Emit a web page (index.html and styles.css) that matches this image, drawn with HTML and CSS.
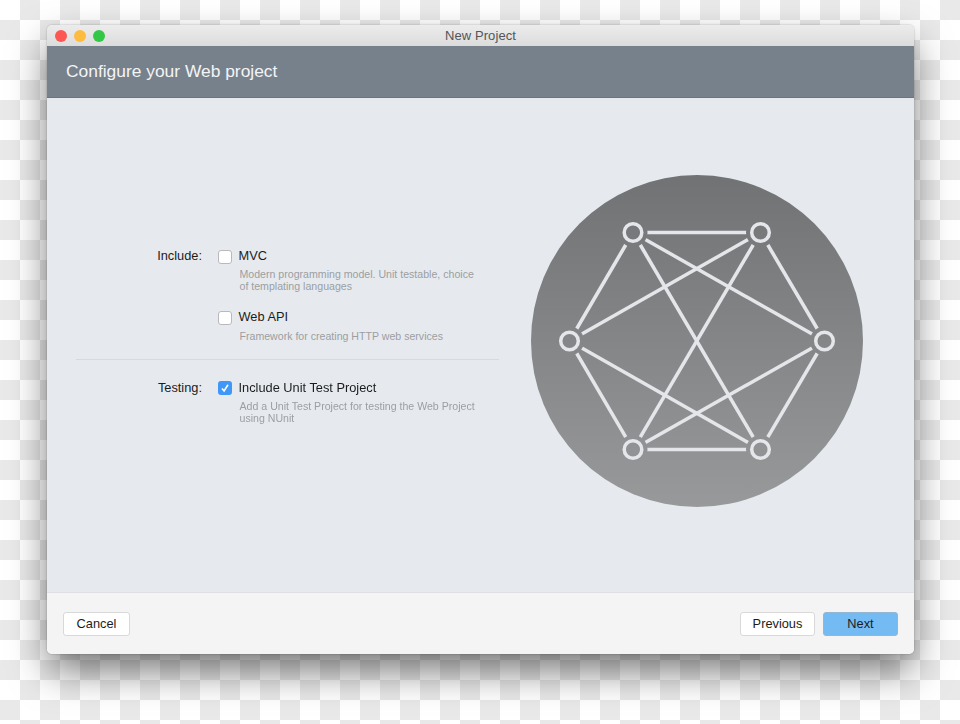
FILE: index.html
```html
<!DOCTYPE html>
<html>
<head>
<title>New Project</title>
<link rel="stylesheet" href="styles.css">
</head>
<body>
<div class="window">
    <div class="titlebar">
        <div class="lights">
            <span class="light red"></span>
            <span class="light yellow"></span>
            <span class="light green"></span>
        </div>
        <div class="window-title">New Project</div>
    </div>
    <div class="banner">Configure your Web project</div>
    <div class="content">
        <div class="form">
            <div class="row">
                <div class="label">Include:</div>
                <span class="check"></span>
                <div class="option">MVC</div>
            </div>
            <div class="desc">Modern programming model. Unit testable, choice<br>of templating languages</div>
            <div class="row next-row">
                <div class="label"></div>
                <span class="check"></span>
                <div class="option">Web API</div>
            </div>
            <div class="desc single">Framework for creating HTTP web services</div>
            <hr class="divider">
            <div class="row">
                <div class="label">Testing:</div>
                <span class="check checked">
                    <svg width="14" height="14" viewBox="0 0 14 14"><path d="M4 7.4 6.1 10 10 3.8" fill="none" stroke="#fff" stroke-width="1.6"/></svg>
                </span>
                <div class="option">Include Unit Test Project</div>
            </div>
            <div class="desc">Add a Unit Test Project for testing the Web Project<br>using NUnit</div>
        </div>
        <div class="picture">
            <svg width="332" height="332" viewBox="0 0 332 332">
                <defs>
                    <linearGradient id="disc" x1="0" y1="0" x2="0" y2="1">
                        <stop offset="0" stop-color="#717274"/>
                        <stop offset="1" stop-color="#98999b"/>
                    </linearGradient>
                    <mask id="gaps" maskUnits="userSpaceOnUse" x="0" y="0" width="332" height="332">
                        <rect width="332" height="332" fill="#fff"/>
                        <circle cx="102" cy="57.5" r="14.5" fill="#000"/>
                        <circle cx="229.5" cy="57.5" r="14.5" fill="#000"/>
                        <circle cx="38.5" cy="166" r="14.5" fill="#000"/>
                        <circle cx="293.5" cy="166" r="14.5" fill="#000"/>
                        <circle cx="102" cy="274.5" r="14.5" fill="#000"/>
                        <circle cx="229.5" cy="274.5" r="14.5" fill="#000"/>
                    </mask>
                </defs>
                <circle cx="166" cy="166" r="166" fill="url(#disc)"/>
                <g stroke="#e4e6ea" stroke-width="3.5" mask="url(#gaps)">
                    <line x1="102" y1="57.5" x2="229.5" y2="57.5"/>
                    <line x1="102" y1="57.5" x2="38.5" y2="166"/>
                    <line x1="102" y1="57.5" x2="293.5" y2="166"/>
                    <line x1="102" y1="57.5" x2="229.5" y2="274.5"/>
                    <line x1="229.5" y1="57.5" x2="38.5" y2="166"/>
                    <line x1="229.5" y1="57.5" x2="293.5" y2="166"/>
                    <line x1="229.5" y1="57.5" x2="102" y2="274.5"/>
                    <line x1="38.5" y1="166" x2="102" y2="274.5"/>
                    <line x1="38.5" y1="166" x2="229.5" y2="274.5"/>
                    <line x1="293.5" y1="166" x2="102" y2="274.5"/>
                    <line x1="293.5" y1="166" x2="229.5" y2="274.5"/>
                    <line x1="102" y1="274.5" x2="229.5" y2="274.5"/>
                </g>
                <g fill="none" stroke="#e4e6ea" stroke-width="3.5">
                    <circle cx="102" cy="57.5" r="8.8"/>
                    <circle cx="229.5" cy="57.5" r="8.8"/>
                    <circle cx="38.5" cy="166" r="8.8"/>
                    <circle cx="293.5" cy="166" r="8.8"/>
                    <circle cx="102" cy="274.5" r="8.8"/>
                    <circle cx="229.5" cy="274.5" r="8.8"/>
                </g>
            </svg>
        </div>
    </div>
    <div class="footer">
        <div class="btn">Cancel</div>
        <div class="footer-right">
            <div class="btn wide">Previous</div>
            <div class="btn wide primary">Next</div>
        </div>
    </div>
</div>
</body>
</html>
```

FILE: styles.css
```css
html, body {
    margin: 0;
    height: 100%;
}
body {
    height: 724px;
    overflow: hidden;
    box-sizing: border-box;
    padding: 25px 0 0 47px;
    background: repeating-conic-gradient(#e9e9e9 0 25%, #fff 0 50%) 0 0 / 40px 40px;
    font-family: "Liberation Sans", Arial, sans-serif;
    color: #1c1c1c;
}
.window {
    width: 867px;
    height: 629px;
    display: flex;
    flex-direction: column;
    border-radius: 5px;
    overflow: hidden;
    box-shadow: 0 18px 38px -2px rgba(0, 0, 0, 0.55), 0 0 2px rgba(0, 0, 0, 0.3);
    filter: blur(0.3px);
}
.titlebar {
    height: 21px;
    flex: none;
    display: flex;
    align-items: center;
    justify-content: center;
    position: relative;
    background: linear-gradient(#ececec, #dcdcdc);
}
.lights {
    position: absolute;
    left: 8px;
    top: 5px;
    display: flex;
    gap: 7px;
}
.light {
    width: 12px;
    height: 12px;
    border-radius: 50%;
}
.red { background: #fc5753; }
.yellow { background: #fdbc40; }
.green { background: #33c748; }
.window-title {
    font-size: 13px;
    letter-spacing: 0.1px;
    color: #555;
}
.banner {
    height: 51px;
    flex: none;
    display: flex;
    align-items: center;
    padding-left: 19px;
    background: #77818c;
    border-bottom: 1px solid #6b757f;
    color: #f3f4f6;
    font-size: 17.4px;
}
.content {
    flex: 1;
    display: flex;
    align-items: center;
    gap: 32px;
    padding: 0 0 8px 29px;
    background: #e6eaef;
}
.form {
    width: 423px;
    margin-bottom: 11px;
}
.row {
    display: flex;
    align-items: center;
    height: 16px;
    font-size: 12.8px;
}
.next-row {
    margin-top: 17px;
}
.label {
    width: 126px;
    margin-right: 16px;
    text-align: right;
}
.check {
    width: 12px;
    height: 12px;
    margin: 2px 6.5px 0 0;
    border: 1px solid #b9b9bb;
    border-radius: 3px;
    background: #fff;
    display: block;
}
.check.checked {
    width: 14px;
    height: 14px;
    margin-top: 0;
    border: 0;
    background: #3f97f8;
}
.check svg {
    display: block;
}
.desc {
    margin: 4px 0 0 163.5px;
    font-size: 10.6px;
    line-height: 12px;
    color: #9c9ea1;
}
.desc.single {
    margin-top: 5px;
}
.divider {
    height: 1px;
    margin: 17px 0 20px;
    border: 0;
    background: #d8d9dc;
}
.picture {
    width: 332px;
    height: 332px;
}
.picture svg {
    display: block;
}
.footer {
    height: 61px;
    flex: none;
    display: flex;
    align-items: center;
    justify-content: space-between;
    padding: 0 16px;
    background: #f4f4f4;
    border-top: 1px solid #dfe0e4;
}
.footer-right {
    display: flex;
    gap: 8px;
}
.btn {
    width: 65px;
    height: 22px;
    line-height: 22px;
    text-align: center;
    font-size: 12.8px;
    background: #fff;
    border: 1px solid #d9d9d9;
    border-radius: 3px;
}
.btn.wide {
    width: 73px;
}
.btn.primary {
    background: #75bbf3;
    border-color: #94b6d2;
}
```
